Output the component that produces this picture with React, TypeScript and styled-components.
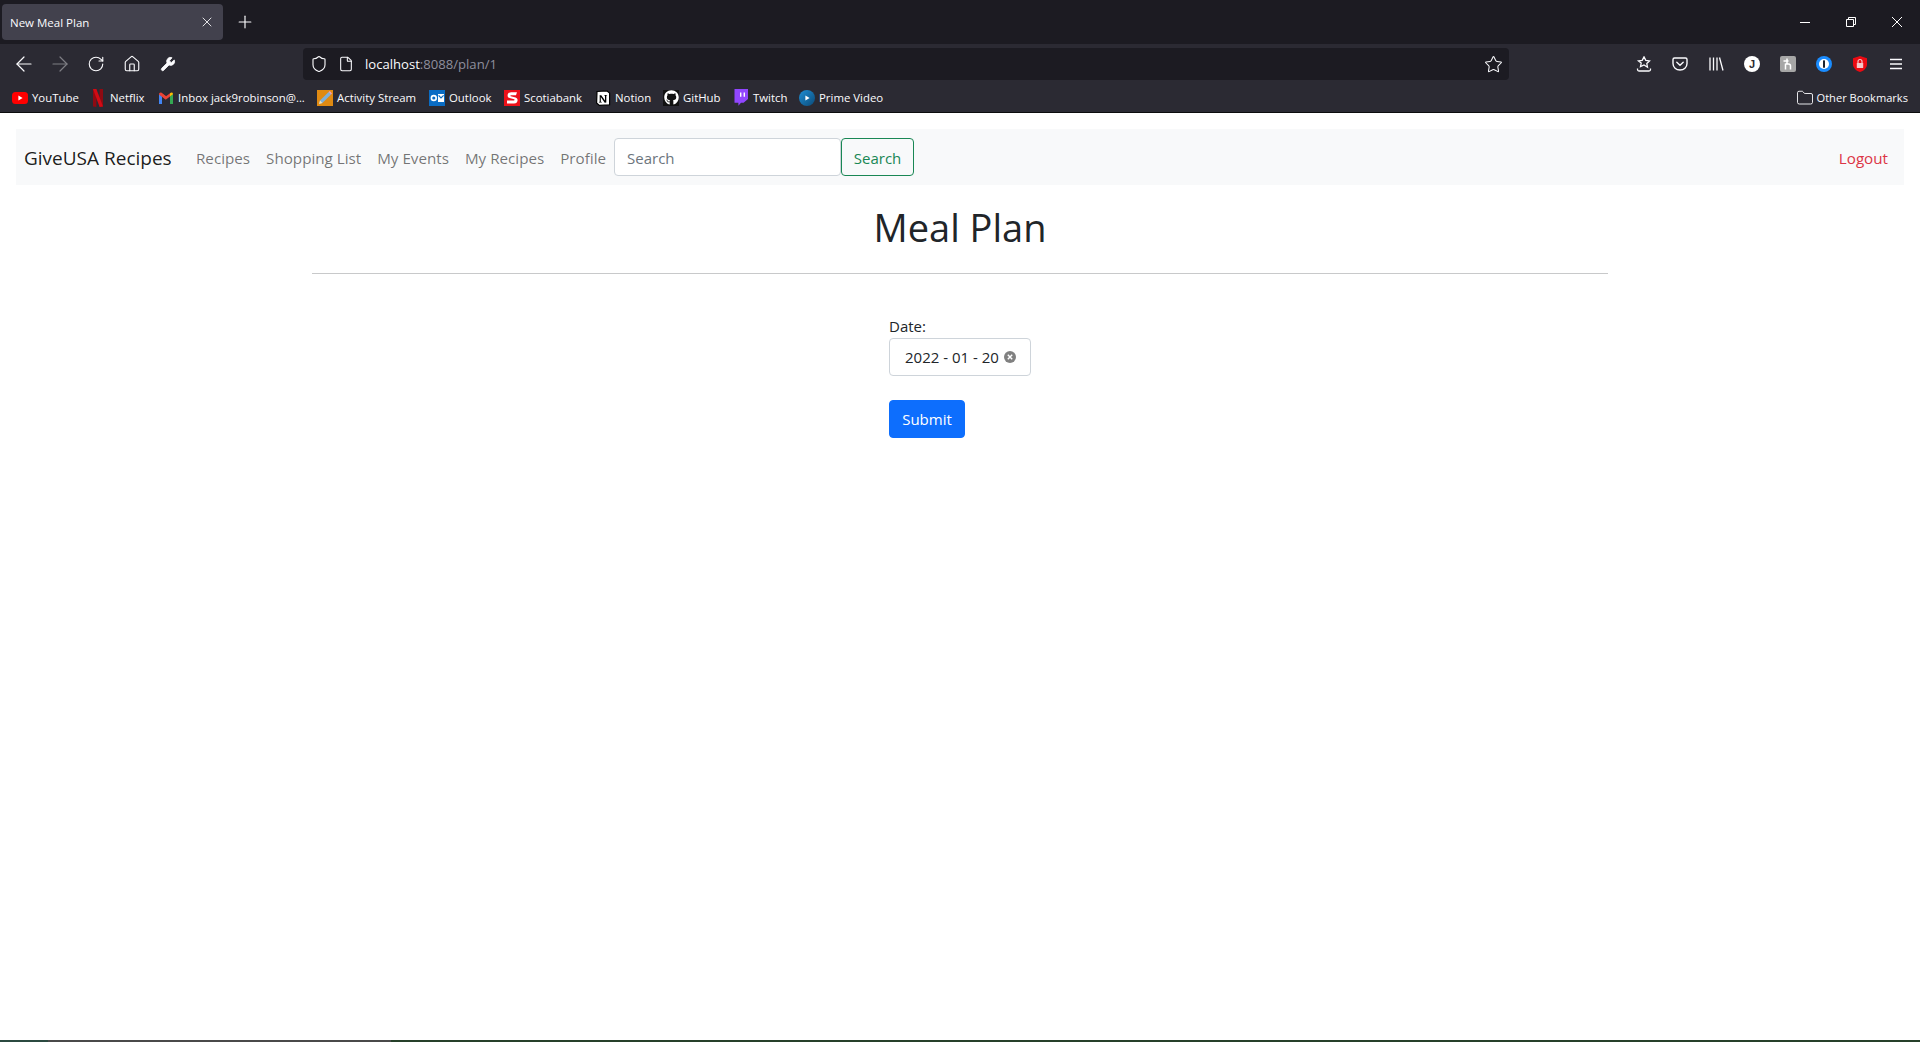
import styled, { createGlobalStyle } from "styled-components"
import {
  ArrowLeft,
  ArrowRight,
  File,
  Folder,
  Home,
  Plus,
  RotateCw,
  Shield,
  Star,
  Wrench,
  X,
} from "lucide-react"
import { FaGithub } from "react-icons/fa"

const GlobalStyle = createGlobalStyle`
  html, body {
    margin: 0;
    padding: 0;
    background: #fff;
  }
  * {
    box-sizing: border-box;
  }
`

const UI_FONT = `"Open Sans", "Noto Sans", sans-serif`

const YouTubeIcon = () => (
  <svg width="16" height="16" viewBox="0 0 16 16">
    <rect y="2" width="16" height="12" rx="3.5" fill="#f00" />
    <path d="M6.4 5.5v5L10.6 8z" fill="#fff" />
  </svg>
)

const NetflixIcon = () => (
  <svg width="16" height="18" viewBox="0 0 16 18">
    <path d="M3 0h3.4v18L3 17.4z" fill="#8f0a12" />
    <path d="M9.6 0H13v17.4L9.6 18z" fill="#8f0a12" />
    <path d="M3 0h3.4l6.6 17.4-3.4.6z" fill="#d20a14" />
  </svg>
)

const GmailIcon = () => (
  <svg width="16" height="14" viewBox="0 0 16 14">
    <path d="M1 13V3l3 2.4V13z" fill="#4285f4" />
    <path d="M12 13V5.4L15 3v10z" fill="#34a853" />
    <path d="M1 3.4C1 1.6 2.6 1 3.6 1.800L8 5.200l-.1 3.600L1 3.400z" fill="#ea4335" />
    <path d="M12 2.200v3.200l3-2.200c0-1.800-1.600-2.200-3-1z" fill="#fbbc04" />
    <path d="M4 2.400 8 5.200l4-3v3.200L8 8.600 4 5.400z" fill="#ea4335" />
  </svg>
)

const ActivityIcon = () => (
  <svg width="16" height="16" viewBox="0 0 16 16">
    <rect width="16" height="16" fill="#e08a12" />
    <path d="M2 14l1-3.400L11.600 2 14 4.400 5.400 13z" fill="#7fb0d8" />
    <path d="M11.600 2 14 4.400l1-1L12.800 1z" fill="#e8a0c8" />
    <path d="M2 14l1-3.400L5.400 13z" fill="#f5e3b8" />
  </svg>
)

const OutlookIcon = () => (
  <svg width="16" height="16" viewBox="0 0 16 16">
    <rect width="16" height="16" fill="#0a6cc4" />
    <circle cx="4.800" cy="8" r="2.400" fill="none" stroke="#fff" strokeWidth="1.600" />
    <rect x="9" y="4" width="6" height="8" fill="#fff" />
    <path d="M9.600 5.400 12 8l2.600-2.600" fill="none" stroke="#0a6cc4" strokeWidth="1.200" />
  </svg>
)

const ScotiaIcon = () => (
  <svg width="16" height="16" viewBox="0 0 16 16">
    <rect width="16" height="16" fill="#ec111a" />
    <path
      d="M13 2.200H7.200C4.600 2.200 3.600 4 3.600 5.400c0 1.300.8 2.200 2 2.600l4.600 1.200c.6.2.4 1.200-.3 1.200H3v3.200h7c2.600 0 3.600-2 3.600-3.400 0-1.400-.8-2.300-2-2.700L6.800 6.300c-.7-.2-.5-1 .2-1H12z"
      fill="#fff"
    />
  </svg>
)

const NotionIcon = () => (
  <svg width="16" height="16" viewBox="0 0 16 16">
    <path d="M2 1.500 11.800.8 14.600 3v11.800L4.400 15.400 1.600 13z" fill="#fff" stroke="#000" strokeWidth="1.200" />
    <path d="M4.500 5.200h1.800L10 10.400V5.600l-.9-.2v-.5h3v.5l-.8.2v7l-1.600.1L5.800 7v4.700l1 .3v.5H3.900V12l.8-.3V5.800z" fill="#000" />
  </svg>
)

const GithubIcon = () => (
  <GithubBox>
    <FaGithub size={15} color="#fff" />
  </GithubBox>
)

const TwitchIcon = () => (
  <svg width="16" height="17" viewBox="0 0 16 17">
    <path d="M1.500 0H15v10l-4.400 3.800H8l-2.600 3v-3H1.500z" fill="#9146ff" />
    <path d="M7 3.400h1.400v4.400H7zm3.600 0H12v4.400h-1.400z" fill="#fff" />
  </svg>
)

const PrimeIcon = () => (
  <svg width="16" height="16" viewBox="0 0 16 16">
    <defs>
      <linearGradient id="prime" x1="0" y1="0" x2="1" y2="1">
        <stop offset="0" stopColor="#1f8fd6" />
        <stop offset="1" stopColor="#0b4a78" />
      </linearGradient>
    </defs>
    <circle cx="8" cy="8" r="8" fill="url(#prime)" />
    <path d="M6.400 5.400v5.200L10.600 8z" fill="#fff" />
  </svg>
)

const bookmarks = [
  { label: "YouTube", icon: <YouTubeIcon />, width: 78 },
  { label: "Netflix", icon: <NetflixIcon />, width: 68 },
  { label: "Inbox jack9robinson@...", icon: <GmailIcon />, width: 159 },
  { label: "Activity Stream", icon: <ActivityIcon />, width: 112 },
  { label: "Outlook", icon: <OutlookIcon />, width: 75 },
  { label: "Scotiabank", icon: <ScotiaIcon />, width: 91 },
  { label: "Notion", icon: <NotionIcon />, width: 68 },
  { label: "GitHub", icon: <GithubIcon />, width: 70 },
  { label: "Twitch", icon: <TwitchIcon />, width: 66 },
  { label: "Prime Video", icon: <PrimeIcon />, width: 100 },
]

const navLinks = ["Recipes", "Shopping List", "My Events", "My Recipes", "Profile"]

const App = () => {
  return (
    <Page>
      <GlobalStyle />
      <Browser>
        <TabStrip>
          <Tab>
            <TabTitle>New Meal Plan</TabTitle>
            <X size={16} strokeWidth={1.3} />
          </Tab>
          <NewTab>
            <Plus size={20} strokeWidth={1.4} />
          </NewTab>
          <WindowControls>
            <WindowButton>
              <svg width="10" height="10" viewBox="0 0 10 10">
                <path d="M0 5.500h10" stroke="#fff" />
              </svg>
            </WindowButton>
            <WindowButton>
              <svg width="10" height="10" viewBox="0 0 10 10" fill="none" stroke="#fff">
                <path d="M.5 2.500h7v7h-7zM2.500 2.500v-2h7v7h-2" />
              </svg>
            </WindowButton>
            <WindowButton>
              <svg width="10" height="10" viewBox="0 0 10 10">
                <path d="M0 0l10 10M10 0 0 10" stroke="#fff" />
              </svg>
            </WindowButton>
          </WindowControls>
        </TabStrip>

        <Toolbar>
          <IconGroup>
            <ToolButton><ArrowLeft size={24} strokeWidth={1.2} /></ToolButton>
            <ToolButton $dim><ArrowRight size={24} strokeWidth={1.2} /></ToolButton>
            <ToolButton><RotateCw size={18} strokeWidth={1.5} /></ToolButton>
            <ToolButton><Home size={18} strokeWidth={1.5} /></ToolButton>
            <ToolButton><Wrench size={16} fill="#fbfbfe" strokeWidth={1.2} /></ToolButton>
          </IconGroup>
          <UrlBar>
            <Shield size={18} strokeWidth={1.5} />
            <File size={16} strokeWidth={1.6} />
            <UrlText>
              localhost<UrlDim>:8088/plan/1</UrlDim>
            </UrlText>
            <UrlStar>
              <Star size={19} strokeWidth={1.3} />
            </UrlStar>
          </UrlBar>
          <RightGroup>
            <ToolButton>
              <svg width="16" height="16" viewBox="0 0 16 16" fill="none" stroke="#fbfbfe" strokeWidth="1.300">
                <path d="M8 .9l1.800 3.500 3.700.5-2.700 2.600.7 3.700L8 9l-3.500 1.700.7-3.700L2.500 4.900l3.700-.5z" />
                <path d="M1.500 12.500v1c0 .8.500 1.500 1.500 1.500h10c1 0 1.500-.7 1.500-1.500v-1" />
              </svg>
            </ToolButton>
            <ToolButton>
              <svg width="16" height="16" viewBox="0 0 16 16" fill="none" stroke="#fbfbfe" strokeWidth="1.400">
                <path d="M2.500 2h11c.8 0 1.500.6 1.500 1.400v4.100C15 11.400 11.900 14 8 14S1 11.400 1 7.500V3.400C1 2.600 1.700 2 2.500 2z" />
                <path d="M4.800 6.200 8 9.200l3.200-3" strokeLinecap="round" />
              </svg>
            </ToolButton>
            <ToolButton>
              <svg width="16" height="16" viewBox="0 0 16 16" stroke="#fbfbfe" strokeWidth="1.300">
                <path d="M2 1.500v13M5.500 1.500v13M9 1.500v13M11.500 1.500 15 14.500" />
              </svg>
            </ToolButton>
            <ToolButton>
              <RoundBadge>J</RoundBadge>
            </ToolButton>
            <ToolButton>
              <SquareBadge>
                <svg width="12" height="12" viewBox="0 0 12 12" fill="none" stroke="#fff" strokeWidth="1.500">
                  <path d="M1.500 3h5M5 .5v5M3.500 5.500v6M3.500 6h3c1.500 0 2 1 2 2v3.500" />
                </svg>
              </SquareBadge>
            </ToolButton>
            <ToolButton>
              <svg width="16" height="16" viewBox="0 0 16 16">
                <circle cx="8" cy="8" r="8" fill="#1a8cff" />
                <circle cx="8" cy="8" r="5" fill="#fff" />
                <rect x="7" y="4.200" width="2" height="7.600" rx=".6" fill="#1c2430" />
              </svg>
            </ToolButton>
            <ToolButton>
              <svg width="16" height="16" viewBox="0 0 16 16">
                <path d="M8 0l7 2.200v6C15 12 11.500 15 8 16 4.500 15 1 12 1 8.200v-6z" fill="#ec0a12" />
                <rect x="4.800" y="7" width="6.400" height="5" rx=".6" fill="#f6c7c9" />
                <path d="M6 7V5.500a2 2 0 0 1 4 0V7" fill="none" stroke="#f6c7c9" strokeWidth="1.200" />
              </svg>
            </ToolButton>
            <ToolButton>
              <svg width="14" height="12" viewBox="0 0 14 12" stroke="#fbfbfe" strokeWidth="1.300">
                <path d="M1 1.500h12M1 6h12M1 10.500h12" />
              </svg>
            </ToolButton>
          </RightGroup>
        </Toolbar>

        <BookmarksBar>
          {bookmarks.map((item) => (
            <Bookmark key={item.label} $width={item.width}>
              <BookmarkIcon>{item.icon}</BookmarkIcon>
              {item.label}
            </Bookmark>
          ))}
          <OtherBookmarks>
            <Folder size={18} strokeWidth={1.2} />
            Other Bookmarks
          </OtherBookmarks>
        </BookmarksBar>
      </Browser>

      <Main>
        <Navbar>
          <Brand>GiveUSA Recipes</Brand>
          <NavList>
            {navLinks.map((link) => (
              <NavLink key={link}>{link}</NavLink>
            ))}
          </NavList>
          <SearchForm>
            <SearchInput readOnly placeholder="Search" />
            <SearchButton>Search</SearchButton>
          </SearchForm>
          <LogoutLink>Logout</LogoutLink>
        </Navbar>

        <Container>
          <Title>Meal Plan</Title>
          <Divider />
          <PlanForm>
            <FieldLabel>Date:</FieldLabel>
            <DateField>
              <span>2022 - 01 - 20</span>
              <ClearIcon>
                <svg width="12" height="12" viewBox="0 0 12 12">
                  <circle cx="6" cy="6" r="6" fill="#808080" />
                  <path d="M3.800 3.800l4.400 4.400M8.200 3.800 3.800 8.200" stroke="#fff" strokeWidth="1.400" />
                </svg>
              </ClearIcon>
            </DateField>
            <SubmitButton>Submit</SubmitButton>
          </PlanForm>
        </Container>
      </Main>

      <Desktop>
        <DesktopPart $width={48} $color="#2b4a40" />
        <DesktopPart $width={343} $color="#4a4a4a" />
        <DesktopPart $color="#26402a" />
      </Desktop>
    </Page>
  )
}

const Page = styled.div`
  display: flex;
  flex-direction: column;
  height: 100vh;
  overflow: hidden;
  font-family: ${UI_FONT};
`

const Browser = styled.header`
  flex: none;
  color: #fbfbfe;
  border-bottom: 1px solid #0c0c0d;
`

const TabStrip = styled.div`
  display: flex;
  align-items: center;
  height: 44px;
  padding-left: 2px;
  background: #1c1b22;
`

const Tab = styled.div`
  display: flex;
  align-items: center;
  justify-content: space-between;
  width: 221px;
  height: 36px;
  padding: 0 8px 0 8px;
  border-radius: 4px;
  background: #42414d;
`

const TabTitle = styled.span`
  font-size: 11.5px;
`

const NewTab = styled.div`
  display: flex;
  justify-content: center;
  width: 36px;
  margin-left: 4px;
`

const WindowControls = styled.div`
  display: flex;
  margin-left: auto;
`

const WindowButton = styled.div`
  display: flex;
  align-items: center;
  justify-content: center;
  width: 46px;
  height: 44px;
`

const Toolbar = styled.div`
  display: flex;
  align-items: center;
  height: 38px;
  padding: 2px 6px 0;
  background: #2b2a33;
`

const IconGroup = styled.div`
  display: flex;
`

const RightGroup = styled(IconGroup)`
  margin-left: auto;
`

const ToolButton = styled.div<{ $dim?: boolean }>`
  display: flex;
  align-items: center;
  justify-content: center;
  width: 36px;
  height: 32px;
  opacity: ${({ $dim }) => ($dim ? 0.4 : 1)};
`

const UrlBar = styled.div`
  display: flex;
  align-items: center;
  width: 1206px;
  height: 32px;
  margin-left: 117px;
  padding: 0 6px 0 7px;
  gap: 10px;
  border-radius: 4px;
  background: #1c1b22;
`

const UrlText = styled.span`
  margin-left: 1px;
  font-size: 13.1px;
`

const UrlDim = styled.span`
  color: #8f8f9d;
`

const UrlStar = styled.div`
  display: flex;
  margin-left: auto;
`

const RoundBadge = styled.div`
  width: 16px;
  height: 16px;
  border-radius: 50%;
  background: #fff;
  color: #2b2a33;
  font-family: "Liberation Sans", sans-serif;
  font-size: 11px;
  font-weight: 700;
  line-height: 16px;
  text-align: center;
`

const SquareBadge = styled.div`
  display: flex;
  align-items: center;
  justify-content: center;
  width: 16px;
  height: 16px;
  border-radius: 2px;
  background: #a6a6a6;
`

const BookmarksBar = styled.div`
  display: flex;
  align-items: center;
  height: 30px;
  padding: 1px 12px 0;
  background: #2b2a33;
  font-size: 11.4px;
`

const Bookmark = styled.div<{ $width: number }>`
  display: flex;
  align-items: center;
  flex: none;
  width: ${({ $width }) => $width}px;
  gap: 4px;
  white-space: nowrap;
`

const BookmarkIcon = styled.span`
  display: flex;
  align-items: center;
  justify-content: center;
  width: 16px;
  height: 16px;
`

const GithubBox = styled.span`
  display: flex;
  align-items: center;
  justify-content: center;
  width: 16px;
  height: 16px;
  background: #111;
`

const OtherBookmarks = styled.div`
  display: flex;
  align-items: center;
  gap: 3px;
  margin-left: auto;
  font-size: 11.1px;
`

const Main = styled.main`
  flex: 1;
  min-height: 0;
  color: #212529;
  font-size: 15px;
  line-height: 24px;
`

const Navbar = styled.nav`
  display: flex;
  align-items: center;
  height: 56px;
  margin: 16px 16px 0;
  padding: 0 8px;
  background: #f8f9fa;
`

const Brand = styled.a`
  width: 164px;
  padding-top: 1px;
  color: rgba(0, 0, 0, 0.9);
  font-size: 19px;
`

const NavList = styled.div`
  display: flex;
  padding-top: 1px;
`

const NavLink = styled.a`
  padding: 0 8px;
  color: rgba(0, 0, 0, 0.55);
  font-size: 15.2px;
`

const SearchForm = styled.form`
  display: flex;
`

const SearchInput = styled.input`
  width: 227px;
  height: 38px;
  padding: 7px 12px 5px;
  border: 1px solid #ced4da;
  border-radius: 4px;
  background: #fff;
  font: inherit;
  outline: none;

  &::placeholder {
    color: #6c757d;
    opacity: 1;
  }
`

const SearchButton = styled.button`
  width: 73px;
  height: 38px;
  padding: 1px 0 0;
  border: 1px solid #198754;
  border-radius: 4px;
  background: transparent;
  color: #198754;
  font: inherit;
`

const LogoutLink = styled.a`
  margin-left: auto;
  padding: 1px 8px 0;
  color: #dc3545;
  font-size: 15.2px;
`

const Container = styled.div`
  width: 1296px;
  margin: 0 auto;
`

const Title = styled.h1`
  margin: 18px 0 0;
  font-size: 38px;
  font-weight: 400;
  line-height: 48px;
  text-align: center;
`

const Divider = styled.hr`
  height: 1px;
  margin: 22px 0 0;
  border: 0;
  background: #c8c9ca;
`

const PlanForm = styled.form`
  display: flex;
  flex-direction: column;
  align-items: flex-start;
  width: 142px;
  margin: 40px auto 0;
`

const FieldLabel = styled.label`
  display: block;
`

const DateField = styled.div`
  display: flex;
  align-items: center;
  width: 142px;
  height: 38px;
  padding: 0 14px 0 15px;
  border: 1px solid #ced4da;
  border-radius: 4px;
  white-space: nowrap;
`

const ClearIcon = styled.span`
  display: flex;
  margin-left: auto;
`

const SubmitButton = styled.button`
  width: 76px;
  height: 38px;
  margin-top: 24px;
  padding: 0;
  border: 1px solid #0d6efd;
  border-radius: 4px;
  background: #0d6efd;
  color: #fff;
  font: inherit;
`

const Desktop = styled.footer`
  display: flex;
  flex: none;
  height: 2px;
`

const DesktopPart = styled.div<{ $width?: number; $color: string }>`
  flex: ${({ $width }) => ($width ? `0 0 ${$width}px` : "1")};
  background: ${({ $color }) => $color};
`

export default App
